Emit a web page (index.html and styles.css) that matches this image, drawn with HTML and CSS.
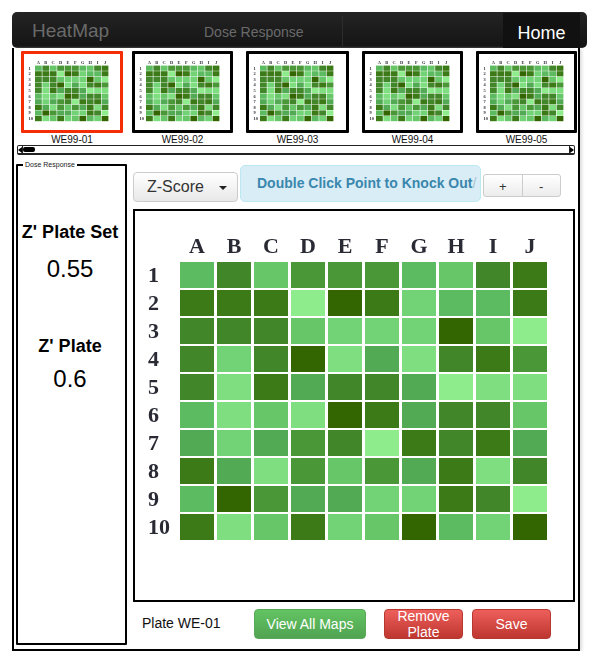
FILE: index.html
```html
<!DOCTYPE html>
<html>
<head>
	<meta charset="UTF-8">
	<title>HeatMap</title>
	<link rel="stylesheet" href="styles.css">
</head>
<body>
	<div id="wrapper">
		<div id="header">
			<div class="Brand">HeatMap</div>
			<div class="Tab">Dose Response</div>
			<div class="Divider"></div>
			<div class="Home">Home</div>
		</div>
		<div id="frame">
			<div id="thumbs">
				<div class="Thumb">
					<div class="ThumbBox Selected"><div class="Plate Small"></div></div>
					<div class="ThumbName">WE99-01</div>
				</div>
				<div class="Thumb">
					<div class="ThumbBox"><div class="Plate Small"></div></div>
					<div class="ThumbName">WE99-02</div>
				</div>
				<div class="Thumb">
					<div class="ThumbBox"><div class="Plate Small"></div></div>
					<div class="ThumbName">WE99-03</div>
				</div>
				<div class="Thumb">
					<div class="ThumbBox"><div class="Plate Small"></div></div>
					<div class="ThumbName">WE99-04</div>
				</div>
				<div class="Thumb">
					<div class="ThumbBox"><div class="Plate Small"></div></div>
					<div class="ThumbName">WE99-05</div>
				</div>
			</div>
			<div id="scroller">
				<div class="ScrollEnd"><span class="ArrowLeft"></span></div>
				<div class="ScrollThumb"></div>
				<div class="ScrollEnd Last"><span class="ArrowRight"></span></div>
			</div>
			<div id="content">
				<fieldset id="side">
					<legend>Dose Response</legend>
					<div class="StatName First">Z' Plate Set</div>
					<div class="StatValue">0.55</div>
					<div class="StatName Second">Z' Plate</div>
					<div class="StatValue">0.6</div>
				</fieldset>
				<div id="main">
					<div id="toolbar">
						<div class="Select">Z-Score<span class="Caret"></span></div>
						<div class="Alert">Double Click Point to Knock Out<span class="Slash">/</span></div>
						<div class="Zoom">
							<div class="ZoomBtn">+</div>
							<div class="ZoomBtn">-</div>
						</div>
					</div>
					<div id="map"><div class="Plate"></div></div>
					<div id="actions">
						<div class="PlateName">Plate WE-01</div>
						<div class="Btn Green">View All Maps</div>
						<div class="Btn Red Remove"><span>Remove Plate</span></div>
						<div class="Btn Red Save">Save</div>
					</div>
				</div>
			</div>
		</div>
	</div>
	<script src="plate.js"></script>
</body>
</html>
```

FILE: styles.css
```css
*
{
	padding: 0px;
	margin: 0px;
	box-sizing: border-box;
}
body
{
	color: black;
	background-color: white;
	font-family: "Liberation Sans", Arial, Helvetica, sans-serif;
}
#wrapper
{
	padding: 12px 0px 0px 12px;
	width: 598px;
}
#header
{
	display: flex;
	align-items: stretch;
	width: 575px;
	height: 36px;
	padding: 1px 7px 0px 20px;
	border-radius: 5px;
	background: linear-gradient(#242424, #141414);
	color: #6a6a6a;
}
.Brand
{
	width: 172px;
	font-size: 19px;
	line-height: 36px;
}
.Tab
{
	width: 138px;
	font-size: 14px;
	line-height: 38px;
}
.Divider
{
	width: 1px;
	margin-top: 3px;
	background-color: #2c2c2c;
}
.Home
{
	margin-left: auto;
	width: 77px;
	background-color: #111111;
	color: white;
	font-size: 18px;
	line-height: 40px;
	text-align: center;
}
#frame
{
	width: 568px;
	height: 603px;
	border: 2px solid black;
	border-top: 0px;
	box-shadow: 2px 1px 3px #dddddd;
}
#thumbs
{
	display: flex;
	gap: 13px;
	padding: 3px 0px 0px 7px;
}
.Thumb
{
	width: 101px;
}
.Thumb:first-child
{
	width: 102px;
	margin-right: -4px;
}
.Thumb:nth-child(3)
{
	width: 103px;
}
.ThumbBox
{
	height: 82px;
	border: 3px solid black;
	border-radius: 1px;
	padding: 6px 0px 0px 4px;
	overflow: hidden;
}
.Selected
{
	border-color: #f52d05;
}
.ThumbName
{
	height: 12px;
	font-size: 10px;
	line-height: 13px;
	text-align: center;
	color: #111111;
}
#scroller
{
	display: flex;
	align-items: stretch;
	width: 558px;
	height: 10px;
	margin: 0px 0px 0px 3px;
	border: 1px solid #222222;
	border-bottom-width: 2px;
	border-radius: 2px;
}
.ScrollEnd
{
	display: flex;
	align-items: center;
	justify-content: center;
	width: 5px;
	border-right: 1px solid #222222;
}
.Last
{
	margin-left: auto;
	border-right: 0px;
	border-left: 1px solid #222222;
}
.ArrowLeft
{
	border-top: 3px solid transparent;
	border-bottom: 3px solid transparent;
	border-right: 4px solid black;
}
.ArrowRight
{
	border-top: 3px solid transparent;
	border-bottom: 3px solid transparent;
	border-left: 4px solid black;
}
.ScrollThumb
{
	width: 12px;
	margin: 1px 0px;
	background-color: black;
	border-radius: 2px;
}
#content
{
	display: flex;
	align-items: flex-start;
	padding: 6px 0px 0px 2px;
}
#side
{
	width: 111px;
	height: 484px;
	min-width: 0px;
	padding-right: 3px;
	border: 2px solid black;
	border-radius: 1px;
	text-align: center;
}
#side legend
{
	margin-left: 5px;
	padding: 0px 2px;
	font-size: 7px;
	line-height: 8px;
	text-align: left;
	color: #222222;
}
.StatName
{
	font-size: 18px;
	font-weight: bold;
	line-height: 20px;
}
.First
{
	margin-top: 53px;
}
.Second
{
	margin-top: 54px;
}
.StatValue
{
	font-size: 24px;
	line-height: 26px;
	margin-top: 14px;
}
.Second + .StatValue
{
	margin-top: 10px;
}
#main
{
	width: 442px;
	margin-left: 6px;
	padding-top: 4px;
}
#toolbar
{
	display: flex;
	align-items: flex-start;
	height: 37px;
}
.Select
{
	display: flex;
	align-items: center;
	width: 105px;
	height: 30px;
	margin-top: 7px;
	padding-left: 13px;
	padding-bottom: 1px;
	border: 1px solid #cccccc;
	border-radius: 4px;
	background: linear-gradient(#ffffff, #e8e8e8);
	color: #333333;
	font-size: 16px;
}
.Caret
{
	margin-left: 15px;
	margin-top: 2px;
	border-top: 4px solid #222222;
	border-left: 4px solid transparent;
	border-right: 4px solid transparent;
}
.Alert
{
	width: 241px;
	height: 37px;
	margin-left: 2px;
	padding-left: 16px;
	border: 1px solid #bce8f1;
	border-radius: 5px;
	background-color: #d9edf7;
	color: #3a87ad;
	font-size: 14px;
	font-weight: bold;
	line-height: 35px;
	white-space: nowrap;
}
.Slash
{
	font-weight: normal;
	color: #a9c4d2;
}
.Zoom
{
	display: flex;
	width: 78px;
	height: 23px;
	margin: 9px 0px 0px 2px;
	border: 1px solid #cccccc;
	border-radius: 3px;
	background: linear-gradient(#ffffff, #ececec);
	color: #333333;
	font-size: 13px;
}
.ZoomBtn
{
	flex: 1;
	text-align: center;
	line-height: 23px;
}
.ZoomBtn + .ZoomBtn
{
	border-left: 1px solid #cccccc;
}
#map
{
	height: 393px;
	margin-top: 7px;
	border: 2px solid black;
	padding: 23px 0px 0px 10px;
}
.Plate
{
	display: grid;
	grid-template-columns: 32px repeat(10, 34px);
	grid-template-rows: repeat(11, 25.5px);
	column-gap: 3px;
	row-gap: 2.5px;
	filter: blur(0.7px);
	font-family: "Liberation Serif", "Times New Roman", serif;
	font-size: 22px;
	font-weight: bold;
	color: #2a2a35;
}
.Small
{
	filter: blur(1.5px);
	transform: scale(0.2);
	transform-origin: 0px 0px;
}
.Head
{
	display: flex;
	align-items: center;
	justify-content: center;
	padding-bottom: 2px;
}
.RowHead
{
	display: flex;
	align-items: center;
	padding-left: 3px;
}
.LevelA { background-color: #336600; }
.LevelB { background-color: #3b7a16; }
.LevelC { background-color: #418629; }
.LevelD { background-color: #4a9738; }
.LevelE { background-color: #52ab54; }
.LevelF { background-color: #5cbb60; }
.LevelG { background-color: #66c668; }
.LevelH { background-color: #72d276; }
.LevelI { background-color: #7fdf80; }
.LevelJ { background-color: #8eec8c; }
#actions
{
	display: flex;
	align-items: center;
	height: 30px;
	margin-top: 7px;
}
.PlateName
{
	width: 121px;
	padding-left: 9px;
	padding-bottom: 2px;
	font-size: 14px;
	color: #111111;
}
.Btn
{
	height: 30px;
	border-radius: 4px;
	color: white;
	font-size: 14px;
	text-align: center;
	line-height: 28px;
}
.Green
{
	width: 112px;
	border: 1px solid #5aa85a;
	background: linear-gradient(#62c462, #51a351);
}
.Red
{
	width: 79px;
	border: 1px solid #b5392e;
	background: linear-gradient(#ee5f5b, #bd362f);
}
.Remove
{
	display: flex;
	align-items: center;
	margin-left: 18px;
	line-height: 16px;
}
.Save
{
	margin-left: 9px;
}
```

FILE: plate.js
```js
var LETTERS="ABCDEFGHIJ";
var ROWS=[
	"FCGDDDFGCB",
	"BBBJABHFFB",
	"CCCGHHHAGJ",
	"CHCAIEICBD",
	"CIBECCEJII",
	"FIGIABECCG",
	"EHEDCJBCBE",
	"BEIDGDEBIC",
	"FADEEHHBCJ",
	"BIGBHGAFHA"
];

function AddCell(plate,cls,text)
{
	var d=document.createElement("div");
	d.className=cls;
	d.textContent=text;
	plate.appendChild(d);
}

function FillPlate(plate)
{
	AddCell(plate,"Head","");
	for (var c=0;c<10;c++)
		AddCell(plate,"Head",LETTERS.charAt(c));
	for (var r=0;r<10;r++)
	{
		AddCell(plate,"RowHead",String(r+1));
		for (var i=0;i<10;i++)
			AddCell(plate,"Level"+ROWS[r].charAt(i),"");
	}
}

var plates=document.querySelectorAll(".Plate");
for (var p=0;p<plates.length;p++)
	FillPlate(plates[p]);
```
